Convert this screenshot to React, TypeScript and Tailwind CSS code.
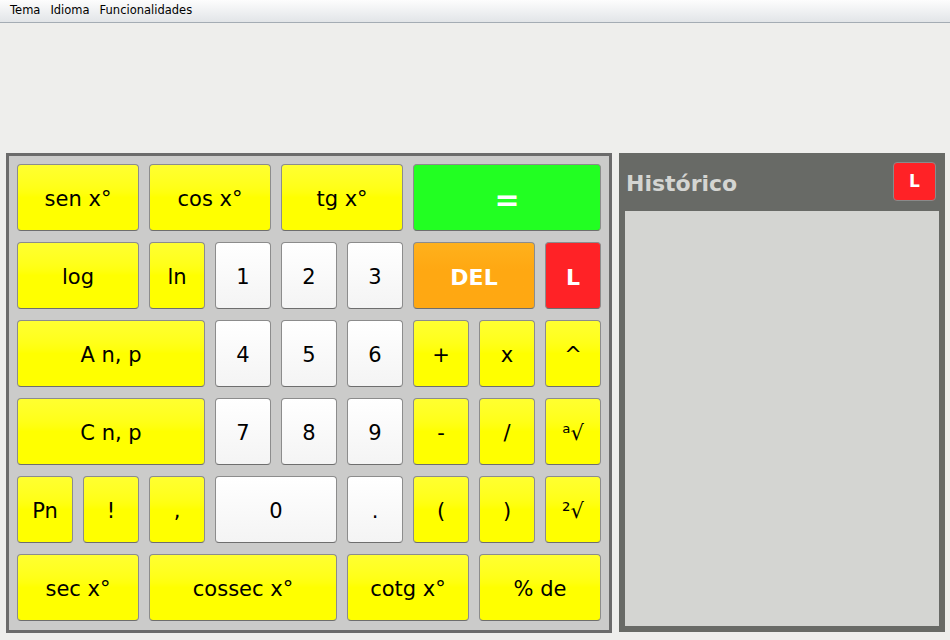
import React from "react"

type Btn = {
    label: React.ReactNode
    col: string
    kind?: "y" | "w" | "g" | "o" | "r"
    bold?: boolean
    size?: string
}

const rows: Btn[][] = [
    [
        { label: "sen x°", col: "col-span-2" },
        { label: "cos x°", col: "col-span-2" },
        { label: "tg x°", col: "col-span-2" },
        { label: "=", col: "col-span-3", kind: "g", bold: true, size: "text-[30px]" },
    ],
    [
        { label: "log", col: "col-span-2" },
        { label: "ln", col: "col-span-1" },
        { label: "1", col: "col-span-1", kind: "w" },
        { label: "2", col: "col-span-1", kind: "w" },
        { label: "3", col: "col-span-1", kind: "w" },
        { label: "DEL", col: "col-span-2", kind: "o", bold: true, size: "text-[22px]" },
        { label: "L", col: "col-span-1", kind: "r", bold: true, size: "text-[22px]" },
    ],
    [
        { label: "A n, p", col: "col-span-3" },
        { label: "4", col: "col-span-1", kind: "w" },
        { label: "5", col: "col-span-1", kind: "w" },
        { label: "6", col: "col-span-1", kind: "w" },
        { label: "+", col: "col-span-1" },
        { label: "x", col: "col-span-1" },
        { label: "^", col: "col-span-1" },
    ],
    [
        { label: "C n, p", col: "col-span-3" },
        { label: "7", col: "col-span-1", kind: "w" },
        { label: "8", col: "col-span-1", kind: "w" },
        { label: "9", col: "col-span-1", kind: "w" },
        { label: "-", col: "col-span-1" },
        { label: "/", col: "col-span-1" },
        { label: <span>ᵃ√</span>, col: "col-span-1" },
    ],
    [
        { label: "Pn", col: "col-span-1" },
        { label: "!", col: "col-span-1" },
        { label: ",", col: "col-span-1" },
        { label: "0", col: "col-span-2", kind: "w" },
        { label: ".", col: "col-span-1", kind: "w" },
        { label: "(", col: "col-span-1" },
        { label: ")", col: "col-span-1" },
        { label: <span>²√</span>, col: "col-span-1" },
    ],
    [
        { label: "sec x°", col: "col-span-2" },
        { label: "cossec x°", col: "col-span-3" },
        { label: "cotg x°", col: "col-span-2" },
        { label: "% de", col: "col-span-2" },
    ],
]

const kinds = {
    y: "bg-gradient-to-b from-[#ffff30] to-[#ffff00] to-50% text-black",
    w: "bg-gradient-to-b from-white to-[#f4f4f4] text-black",
    g: "bg-[#22ff22] text-white",
    o: "bg-gradient-to-b from-[#ffb11c] to-[#ffa812] to-40% text-white",
    r: "bg-[#ff2226] text-white",
}

function Key({ b }: { b: Btn }) {
    const k = b.kind ?? "y"
    return (
        <button
            className={`${b.col} ${kinds[k]} ${b.size ?? "text-[21px]"} ${b.bold ? "font-bold" : ""} flex items-center justify-center pt-[4px] rounded-[4px] border border-[#8c8c8c] border-b-[#6e6e6e] leading-none`}
        >
            {b.label}
        </button>
    )
}

export default function App() {
    return (
        <div className="w-[950px] h-[640px] bg-[#eeeeec] overflow-hidden font-['DejaVu_Sans',sans-serif]">

            <div className="h-[23px] flex items-center gap-[10px] pl-[10px] text-[11.5px] text-black bg-gradient-to-b from-[#fdfdfd] to-[#e2e5e8] border-b border-[#a4acb4]">
                <span>Tema</span>
                <span>Idioma</span>
                <span>Funcionalidades</span>
            </div>

            <div className="flex pt-[130px] pl-[6px] gap-[7px]">

                <div className="w-[606px] h-[480px] border-[3px] border-[#6b6b6b] bg-[#cbcbca] pl-[8px] pt-[8px]">
                    <div className="grid grid-cols-[repeat(9,56px)] grid-rows-[repeat(6,67px)] gap-x-[10px] gap-y-[11px]">
                        {rows.flat().map((b, i) => (
                            <Key key={i} b={b} />
                        ))}
                    </div>
                </div>

                <div className="w-[326px] h-[479px] bg-[#686a66] px-[6px] pb-[6px] flex flex-col">
                    <div className="h-[58px] flex items-center justify-between pl-[1px] pr-[3px] pt-[2px]">
                        <span className="font-bold text-[22px] text-[#d4d5d2]">Histórico</span>
                        <button className="self-start mt-[7px] w-[43px] h-[39px] rounded-[4px] bg-[#ff2226] border border-[#8a8a8a] text-white font-bold text-[17px]">
                            L
                        </button>
                    </div>
                    <div className="flex-1 bg-[#d4d5d2]" />
                </div>

            </div>
        </div>
    )
}
